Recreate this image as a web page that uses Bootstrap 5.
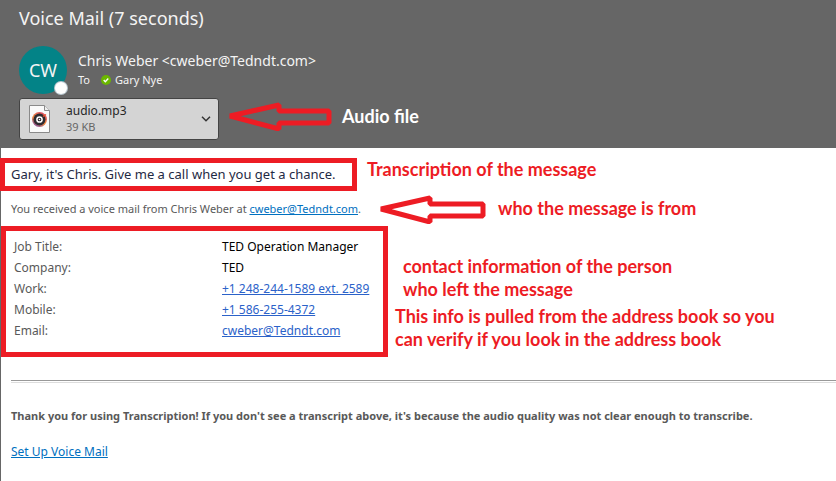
<!DOCTYPE html>
<html lang="en">
<head>
<meta charset="utf-8">
<meta name="viewport" content="width=device-width, initial-scale=1">
<title>Voice Mail (7 seconds)</title>
<link href="https://cdn.jsdelivr.net/npm/bootstrap@5.3.0/dist/css/bootstrap.min.css" rel="stylesheet">
<style>
  body { font-family: "Noto Sans", "Open Sans", sans-serif; font-size: 12px; line-height: 20px; color: #595959; background: #fff; }
  .mail-head { background: #666; color: #f4f4f4; padding: 4px 19px 8px; }
  .subject { font-size: 18px; line-height: 28px; margin: 0 0 14px; font-weight: 400; }
  .avatar { width: 48px; height: 48px; border-radius: 50%; background: #038387; font-size: 18px; }
  .presence { right: 0; bottom: 0; width: 12px; height: 12px; border-radius: 50%; background: #fff; box-shadow: 0 0 0 1px #b9c7cf; }
  .who-to { margin-left: 11px; }
  .sender { font-size: 14px; line-height: 20px; padding-top: 5px; }
  .recipient { font-size: 11px; line-height: 18px; gap: 11px; }
  .attachment { width: 200px; height: 42px; background: #d4d4d4; border: 1px solid #444; border-radius: 3px; padding: 0 7px 0 9px; color: #262626; line-height: 16px; }
  .attachment small { font-size: 11px; color: #666; }
  .attachment-name { margin-left: 15px; }
  .callout { padding-bottom: 6px; }
  .note { font-family: Lato, "Liberation Sans", sans-serif; font-weight: 700; font-size: 18px; line-height: 23px; color: #ed1c24; margin: 0; }
  .mail-body { border-left: 1px solid #666; padding: 10px 0 16px; min-height: calc(100vh - 148px); }
  .frame { border: 5px solid #ed1c24; }
  .transcript { width: 357px; margin: 0 10px 0 -1px; padding: 1px 6px; font-size: 13px; line-height: 21px; color: #1f2a44; }
  .source { padding-left: 10px; margin: 2px 0; font-size: 11px; }
  .source .note { margin-left: 11px; }
  a { color: #0070c0; }
  .contact { width: 387px; padding: 5px 8px 11px; }
  .contact th { width: 208px; font-weight: 400; line-height: 21px; padding: 0; }
  .contact td { color: #000; line-height: 21px; padding: 0; }
  .contact a { color: #2b62c9; }
  .remark { padding: 29px 0 0 7px; }
  .rule { margin: 23px 0 23px 10px; border: 0; border-top: 1px solid #999; border-bottom: 1px solid #ddd; height: 3px; opacity: 1; }
  .closing { margin-left: 10px; }
  .thanks { font-size: 11px; }
</style>
</head>
<body>
<header class="mail-head">
  <h1 class="subject">Voice Mail (7 seconds)</h1>
  <div class="d-flex">
    <div class="avatar position-relative d-flex align-items-center justify-content-center flex-shrink-0">CW<span class="presence position-absolute"></span></div>
    <div class="who-to">
      <div class="sender">Chris Weber &lt;cweber@Tedndt.com&gt;</div>
      <div class="recipient d-flex align-items-center"><span>To</span>
        <span class="d-flex align-items-center gap-1"><svg width="10" height="10" viewBox="0 0 10 10" aria-hidden="true"><circle cx="5" cy="5" r="5" fill="#6bb700"/><path d="M2.7 5.1l1.6 1.6 3-3.2" fill="none" stroke="#fff" stroke-width="1.4"/></svg>Gary Nye</span>
      </div>
    </div>
  </div>
  <div class="d-flex align-items-center mt-1">
    <button type="button" class="attachment d-flex align-items-center text-start">
      <svg width="22" height="28" viewBox="0 0 22 28" aria-hidden="true">
        <defs><linearGradient id="disc" x1="0.2" y1="1" x2="0.8" y2="0"><stop offset="0" stop-color="#7d4aa8"/><stop offset=".45" stop-color="#f28a3c"/><stop offset="1" stop-color="#d8456b"/></linearGradient></defs>
        <path d="M.5.5h15l5 5v22H.5z" fill="#fafafa" stroke="#8a8a8a"/><path d="M15.500 .5v5h5" fill="#eee" stroke="#8a8a8a"/>
        <circle cx="10.500" cy="14.500" r="7.500" fill="url(#disc)"/><circle cx="10.500" cy="14.500" r="6" fill="#2e2b30"/><circle cx="10.500" cy="14.500" r="2.600" fill="none" stroke="#fff" stroke-width="1.500"/><circle cx="10.500" cy="14.500" r=".8" fill="#fff"/><path d="M14 11.500l3-2" stroke="#f0552e" stroke-width="1.500"/>
      </svg>
      <span class="attachment-name flex-grow-1">audio.mp3<small class="d-block">39 KB</small></span>
      <svg width="10" height="6" viewBox="0 0 10 6" aria-hidden="true"><path d="M1 .8l4 4 4-4" fill="none" stroke="#333" stroke-width="1.500"/></svg>
    </button>
    <div class="callout d-flex align-items-center ms-2 gap-2">
      <svg width="107" height="30" viewBox="0 0 107 30" aria-hidden="true"><path d="M3 15L52 4v6h50v12H52v6z" fill="none" stroke="#ed1c24" stroke-width="5" stroke-linejoin="bevel"/></svg>
      <p class="note text-white">Audio file</p>
    </div>
  </div>
</header>
<main class="mail-body">
  <div class="d-flex align-items-start">
    <p class="frame transcript text-nowrap">Gary, it's Chris. Give me a call when you get a chance.</p>
    <p class="note">Transcription of the message</p>
  </div>
  <div class="source d-flex align-items-center">
    <span>You received a voice mail from Chris Weber at <a href="mailto:cweber@Tedndt.com">cweber@Tedndt.com</a>.</span>
    <svg class="ms-3" width="110" height="31" viewBox="0 0 110 31" aria-hidden="true"><path d="M4 16L53 5v6h53v12H53v6z" fill="none" stroke="#ed1c24" stroke-width="5" stroke-linejoin="bevel"/></svg>
    <p class="note">who the message is from</p>
  </div>
  <div class="d-flex align-items-start">
    <div class="frame contact flex-shrink-0">
      <table class="w-100">
        <tbody>
          <tr><th scope="row">Job Title:</th><td>TED Operation Manager</td></tr>
          <tr><th scope="row">Company:</th><td>TED</td></tr>
          <tr><th scope="row">Work:</th><td><a href="tel:+12482441589">+1 248-244-1589 ext. 2589</a></td></tr>
          <tr><th scope="row">Mobile:</th><td><a href="tel:+15862554372">+1 586-255-4372</a></td></tr>
          <tr><th scope="row">Email:</th><td><a href="mailto:cweber@Tedndt.com">cweber@Tedndt.com</a></td></tr>
        </tbody>
      </table>
    </div>
    <div class="remark">
      <p class="note ps-2">contact information of the person<br>who left the message</p>
      <p class="note mt-1">This info is pulled from the address book so you<br>can verify if you look in the address book</p>
    </div>
  </div>
  <hr class="rule">
  <p class="closing thanks fw-bold mb-3">Thank you for using Transcription! If you don't see a transcript above, it's because the audio quality was not clear enough to transcribe.</p>
  <a class="closing" href="#setup">Set Up Voice Mail</a>
</main>
<script src="https://cdn.jsdelivr.net/npm/bootstrap@5.3.0/dist/js/bootstrap.bundle.min.js"></script>
</body>
</html>
